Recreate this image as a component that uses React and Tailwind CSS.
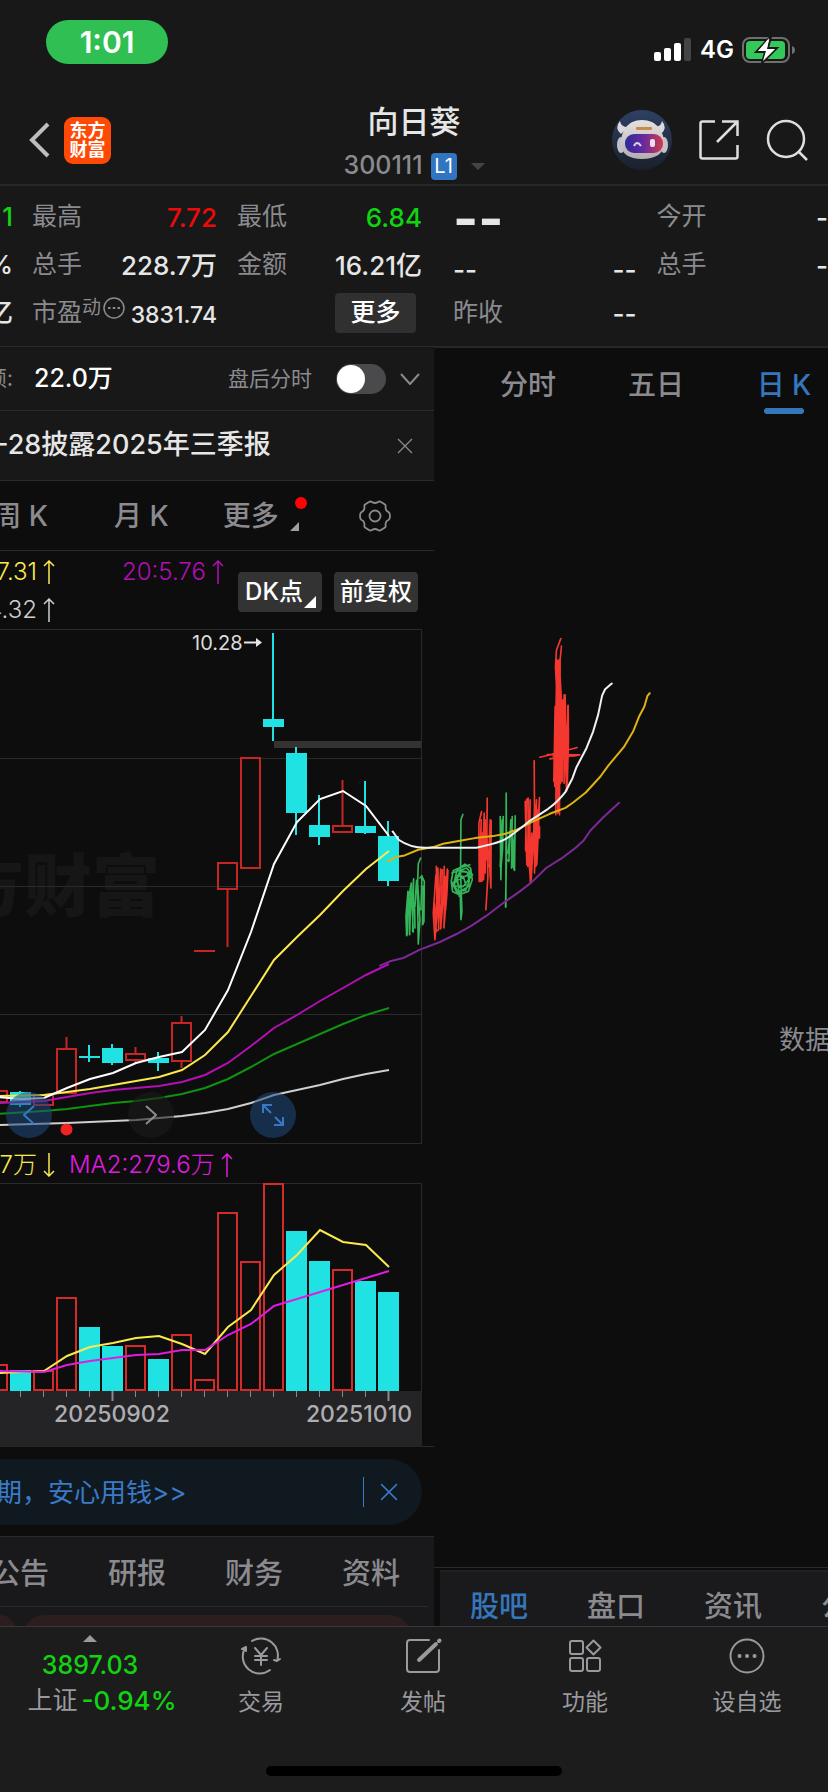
import clsx from 'clsx'

const FONT = "font-[Inter,'Noto_Sans_CJK_SC',sans-serif]"

const CANDLES = [
  { x: -2, up: true, open: 1091, close: 1102 },
  { x: 21, open: 1092, close: 1105, high: 1091, low: 1107 },
  { x: 44, up: true, open: 1095, close: 1105 },
  { x: 67, up: true, open: 1049, close: 1093, high: 1037 },
  { x: 90, open: 1056, close: 1058, high: 1045, low: 1062 },
  { x: 113, open: 1048, close: 1063, high: 1044, low: 1065 },
  { x: 136, up: true, open: 1054, close: 1060, high: 1047, low: 1063 },
  { x: 159, open: 1058, close: 1063, high: 1052, low: 1071 },
  { x: 182, up: true, open: 1023, close: 1061, high: 1016, low: 1068 },
  { x: 205, up: true, open: 951, close: 951 },
  { x: 228, up: true, open: 863, close: 889, low: 947 },
  { x: 251, up: true, open: 758, close: 868 },
  { x: 274, open: 719, close: 727, high: 633, low: 741 },
  { x: 297, open: 753, close: 813, high: 747, low: 835 },
  { x: 320, open: 825, close: 837, high: 795, low: 845 },
  { x: 343, up: true, open: 826, close: 832, high: 780 },
  { x: 366, open: 826, close: 833, high: 781, low: 834 },
  { x: 389, open: 836, close: 881, high: 821, low: 886 },
]

const VOLUMES = [
  { x: -2, up: true, top: 1365 },
  { x: 21, top: 1370 },
  { x: 44, up: true, top: 1371 },
  { x: 67, up: true, top: 1298 },
  { x: 90, top: 1327 },
  { x: 113, top: 1346 },
  { x: 136, up: true, top: 1346 },
  { x: 159, top: 1359 },
  { x: 182, up: true, top: 1335 },
  { x: 205, up: true, top: 1380 },
  { x: 228, up: true, top: 1213 },
  { x: 251, up: true, top: 1262 },
  { x: 274, up: true, top: 1184 },
  { x: 297, top: 1231 },
  { x: 320, top: 1261 },
  { x: 343, up: true, top: 1270 },
  { x: 366, top: 1281 },
  { x: 389, top: 1292 },
]

const MA_LINES = [
  {
    color: '#cfcfcf',
    points:
      '-2,1125 67,1123 136,1120 159,1118 182,1116 205,1113 228,1109 251,1103 274,1095 297,1090 320,1085 343,1079 366,1074 389,1070',
  },
  {
    color: '#0f930f',
    points:
      '-2,1114 44,1111 67,1109 90,1106 113,1103 136,1101 159,1098 182,1094 205,1088 228,1079 251,1067 274,1054 297,1044 320,1034 343,1024 366,1015 389,1008',
  },
  {
    color: '#b40fb4',
    points:
      '-2,1103 44,1101 67,1097 90,1093 113,1090 136,1088 159,1086 182,1082 205,1075 228,1063 251,1046 274,1028 297,1015 320,1001 343,988 366,975 389,964',
  },
  {
    color: '#fbe94e',
    points:
      '-2,1096 44,1095 67,1092 90,1089 113,1085 136,1081 159,1077 182,1070 205,1055 228,1032 251,996 274,960 297,937 320,915 343,891 366,869 389,851',
  },
  {
    color: '#ffffff',
    points:
      '-2,1097 21,1099 44,1098 67,1088 90,1079 113,1073 136,1063 159,1057 182,1052 205,1030 228,990 251,932 274,864 297,822 320,799 343,791 366,806 389,836',
  },
]

const VOLUME_LINES = [
  {
    color: '#fbe94e',
    points:
      '-2,1373 44,1371 67,1356 90,1347 113,1343 136,1338 159,1336 182,1344 205,1354 228,1327 251,1310 274,1275 297,1255 320,1230 343,1242 366,1245 389,1267',
  },
  {
    color: '#e01be0',
    points:
      '-2,1371 44,1372 67,1365 90,1361 113,1358 136,1355 159,1354 182,1350 205,1350 228,1335 251,1324 274,1306 297,1299 320,1292 343,1285 366,1278 389,1271',
  },
]

// freehand strokes, drawn on a 900 x 1080 board
const STROKES = [
  {
    color: '#34b559',
    d: 'M152 715L145 732L143 790L150 900L145 973M145 973L142 780M110 948L108 890L114 815L112 945M119 945L117 830L124 790L121 880L119 945M130 937L126 850L131 777L128 935M135 925L134 860L140 782L135 860M150 775L156 768L153 870M156 770L163 785L162 905L158 915L160 800M117 820L119 905',
  },
  {
    color: '#f5382f',
    d: 'M199 740L202 870L195 960L190 880L198 765M204 745L206 930L199 935L193 850M212 748L208 850L213 925L217 750M223 740L220 840L212 928L215 800M232 748L228 850L222 925L226 770M199 880L201 800M234 752L231 820L227 870',
  },
  {
    color: '#34b559',
    d: 'M279 584L273 600L272 760L276 875L273 900L271 820M300 735L275 742L250 752L244 785L248 815L268 825L295 815L307 780L302 745L285 733L262 750L252 790L262 815L287 812L298 785L292 757L270 755L258 780L270 803L288 795L280 770L262 768L268 830M246 760L290 745L308 765L280 800L250 798L276 752L300 760L296 800L262 820L247 790L305 760',
  },
  {
    color: '#f5382f',
    d: 'M352 535L351 640L354 770L348 870M335 575L327 610L328 785L334 600L331 785L338 640L336 785L343 580L341 780L346 600L346 760M361 600L357 700L363 805L364 602L358 740M352 560L350 720',
  },
  {
    color: '#34b559',
    d: 'M409 520L408 862M409 520L410 700L407 862M391 590L393 780L397 600L391 740M400 590L398 690L393 750M427 590L425 745L431 680L423 600L417 725L412 720M436 588L434 752L430 740L436 630M420 640L415 700',
  },
  {
    color: '#f5382f',
    d: 'M493 423L494 560L490 690L482 790L478 720L467 690L470 540L475 535L474 740L481 540L479 750L486 640L484 780L496 555L494 760L500 540L498 740L509 533L506 620L501 735M466 545L471 735M509 620L509 655M502 570L498 700',
  },
  {
    color: '#f5382f',
    d: 'M573 56L560 90L557 140L562 240L552 485L556 260L555 500L561 120L558 585L566 120L564 580L571 115L569 585M575 78L569 140L574 225L572 490L579 240L577 485L583 225L588 320L583 490L586 225L590 515L594 258L590 490M595 256L596 360L592 510M573 225L566 400',
  },
  {
    color: '#f5382f',
    d: 'M510 412L545 404L622 383M532 404L630 405L540 417M550 410L620 408',
  },
]

const SKETCH_LINES = [
  {
    color: '#7c2896',
    d: 'M30 1038L60 1025L100 1015L150 990L210 967L260 943L305 918L350 888L400 850L450 815L485 788L530 744L575 716L620 682L640 664L662 632L700 593L748 549',
  },
  {
    color: '#dcb312',
    d: 'M54 725L78 712L104 707L145 690L190 682L220 672L270 663L315 655L370 649L410 641L440 630L490 605L540 582L587 564L610 548L648 518L692 470L715 438L762 382L790 335L808 290L824 260L833 228L840 220',
  },
  {
    color: '#f2f2f2',
    d: 'M68 635L86 660Q120 684 165 684L320 684L365 673Q405 664 430 642Q460 620 480 603L535 567Q565 545 587 516L608 475L620 442L650 385L670 335L685 285L697 227L706 208L726 191',
  },
]

function ArrowUp({ className }) {
  return (
    <svg className={clsx('h-6 w-3 shrink-0', className)} viewBox="0 0 12 24" fill="none" stroke="currentColor" strokeWidth="1.5">
      <path d="M6 24V1M1 6l5-5 5 5" />
    </svg>
  )
}

function Cross({ className }) {
  return (
    <svg className={className} viewBox="0 0 16 16" fill="none" stroke="currentColor" strokeWidth="1.300" aria-hidden="true">
      <path d="M1 1l14 14M15 1L1 15" />
    </svg>
  )
}

function StatusBar() {
  return (
    <div className="flex h-[88px] items-start justify-between pt-5 pr-8 pl-[46px] text-white">
      <div className="flex h-11 w-[122px] items-center justify-center rounded-full bg-[#30bf52] text-3xl font-semibold">1:01</div>
      <div className="flex h-[60px] items-center">
        <svg className="h-6 w-[38px]" viewBox="0 0 38 24" fill="#fff" aria-hidden="true">
          <rect x="0" y="14" width="7" height="9" rx="2" />
          <rect x="10" y="10" width="7" height="13" rx="2" />
          <rect x="20" y="5" width="7" height="18" rx="2" />
          <rect x="30" y="0" width="7" height="23" rx="2" fill="#444" />
        </svg>
        <span className="ml-2 text-2xl font-semibold">4G</span>
        <svg className="ml-2 h-[26px] w-[54px]" viewBox="0 0 54 26" aria-hidden="true">
          <rect x="1" y="1" width="46" height="24" rx="7" fill="none" stroke="#6f6f6f" strokeWidth="2" />
          <rect x="4" y="4" width="39" height="18" rx="4" fill="#34c759" />
          <path d="M50 9q3 1 3 4t-3 4z" fill="#6f6f6f" />
          <path d="M28 0L14 15h9l-3 11L35 11h-9l3-11z" fill="#fff" stroke="#181818" strokeWidth="2" />
          <path d="M27 1L16 14h8l-3 10L33 12h-8z" fill="#fff" />
        </svg>
      </div>
    </div>
  )
}

function Robot() {
  return (
    <svg className="size-[60px]" viewBox="0 0 60 60" aria-hidden="true">
      <defs>
        <linearGradient id="sky" x1="0" y1="0" x2="0" y2="1">
          <stop offset="0" stopColor="#2e4163" />
          <stop offset="1" stopColor="#1a202c" />
        </linearGradient>
        <linearGradient id="visor">
          <stop offset="0" stopColor="#2a2b9c" />
          <stop offset="0.5" stopColor="#6a2a9c" />
          <stop offset="1" stopColor="#d23a4c" />
        </linearGradient>
        <linearGradient id="shell" x1="0" y1="0" x2="0" y2="1">
          <stop offset="0" stopColor="#e6e2e1" />
          <stop offset="1" stopColor="#b3adb2" />
        </linearGradient>
      </defs>
      <circle cx="30" cy="30" r="30" fill="url(#sky)" />
      <path d="M8 11q-6 7 1 13l7-7q-7 0-8-6zM50 11q6 7-1 13l-7-7q7 0 8-6z" fill="#dcd9dd" />
      <ellipse cx="9" cy="35" rx="4" ry="8" fill="#c4bfc8" />
      <ellipse cx="52" cy="35" rx="4" ry="8" fill="#c4bfc8" />
      <path d="M30 10C15 10 9 22 9 33c0 11 8 16 21 16s22-5 22-16C52 22 45 10 30 10z" fill="url(#shell)" />
      <rect x="24" y="17" width="16" height="3" rx="1" fill="#c98a4b" />
      <rect x="13" y="24" width="38" height="19" rx="9" fill="url(#visor)" />
      <path d="M22 36q3-6 7 0" fill="none" stroke="#d9d4f5" strokeWidth="2" />
      <rect x="38" y="29" width="5" height="8" rx="2" fill="#eadff0" />
    </svg>
  )
}

function Header() {
  return (
    <header className="border-b-2 border-[#272727] bg-[#181818]">
      <StatusBar />
      <div className="flex h-24 items-center justify-between px-5">
        <div className="flex flex-1 items-center gap-3.5 pt-2">
          <button type="button" aria-label="返回" className="ml-2">
            <svg className="h-9 w-[22px]" viewBox="0 0 22 36" fill="none" stroke="#bdbdbd" strokeWidth="4">
              <path d="M20 2L4 18l16 16" />
            </svg>
          </button>
          <a
            href="#home"
            className="flex size-[47px] flex-col items-center justify-center rounded-[9px] bg-[#ff4a05] text-lg leading-[19px] font-bold text-white"
          >
            <span>东方</span>
            <span>财富</span>
          </a>
        </div>
        <div className="flex flex-col items-center pt-3">
          <h1 className="text-[31px] leading-[44px] font-medium text-[#e6e6e6]">向日葵</h1>
          <div className="mt-1 flex h-9 items-center text-[25px] font-medium text-[#8a8a8f]">
            <span>300111</span>
            <span className="ml-2 flex h-[27px] w-[26px] items-center justify-center rounded bg-[#3074c2] text-xl font-normal text-white">
              L1
            </span>
            <svg className="ml-3.5 h-[7px] w-3.5" viewBox="0 0 14 7" fill="#444" aria-hidden="true">
              <path d="M0 0h14L7 7z" />
            </svg>
          </div>
        </div>
        <div className="flex flex-1 items-center justify-end gap-[27px] pt-2">
          <button type="button" aria-label="助手">
            <Robot />
          </button>
          <button type="button" aria-label="分享">
            <svg className="size-10" viewBox="0 0 40 40" fill="none" stroke="#dedede" strokeWidth="2.5">
              <path d="M16 1.500H3.500Q1.500 1.500 1.500 3.500V36.500Q1.500 38.500 3.500 38.500H36.500Q38.500 38.500 38.500 36.500V25M23 1.500H38.500V16M38 2L18 22" />
            </svg>
          </button>
          <button type="button" aria-label="搜索">
            <svg className="size-[42px]" viewBox="0 0 42 42" fill="none" stroke="#dedede" strokeWidth="2.5">
              <circle cx="20" cy="20" r="18" />
              <path d="M32 32l9 9" />
            </svg>
          </button>
        </div>
      </div>
    </header>
  )
}

function Quote({ label, value, tone = 'text-[#e6e6e6]' }) {
  return (
    <div className="flex h-12 items-center justify-between">
      <dt className="text-[25px] text-[#8a8a8f]">{label}</dt>
      <dd className={clsx('text-[26px] font-medium', tone)}>{value}</dd>
    </div>
  )
}

function Quotes() {
  return (
    <section className="grid grid-cols-[434fr_394fr] bg-[#181818] pt-[7px] pb-[9px] whitespace-nowrap">
      <div className="flex gap-[19px] overflow-hidden pr-3">
        <div className="flex w-[13px] shrink-0 flex-col items-end text-[26px] leading-[48px] font-medium text-[#e6e6e6]">
          <span className="text-[#12d312]">1</span>
          <span>%</span>
          <span>亿</span>
        </div>
        <dl className="grid flex-1 grid-cols-2 gap-x-5">
          <Quote label="最高" value="7.72" tone="text-[#ea0b0b]" />
          <Quote label="最低" value="6.84" tone="text-[#12d312]" />
          <Quote label="总手" value="228.7万" />
          <Quote label="金额" value="16.21亿" />
          <div className="flex h-12 items-center justify-between text-[#8a8a8f]">
            <dt className="flex items-center text-[25px]">
              市盈<sup className="top-0 self-start text-[19px] leading-7">动</sup>
              <svg className="mb-2.5 ml-0.5 size-[22px]" viewBox="0 0 22 22" fill="none" stroke="currentColor" strokeWidth="1.5" aria-hidden="true">
                <circle cx="11" cy="11" r="10" />
                <path d="M5 11h2.500M9.750 11h2.500M14.500 11h2.500" strokeWidth="2" />
              </svg>
            </dt>
            <dd className="pt-1 text-[23px] font-medium text-[#e6e6e6]">3831.74</dd>
          </div>
          <div className="flex h-12 items-center justify-end pr-1.5">
            <button type="button" className="h-10 w-[81px] rounded bg-[#303030] pb-0.5 text-[25px] leading-9 font-medium text-white">
              更多
            </button>
          </div>
        </dl>
      </div>
      <div className="overflow-hidden pl-[19px]">
        <dl className="grid w-[387px] grid-cols-2 gap-x-5">
          <div className="flex h-12 items-center pt-1 text-[54px] leading-[44px] font-bold text-[#e6e6e6]">
            <dd>--</dd>
          </div>
          <Quote label="今开" value="--" />
          <div className="flex h-12 items-end justify-between text-[26px] font-medium text-[#e6e6e6]">
            <dd>--</dd>
            <dd>--</dd>
          </div>
          <Quote label="总手" value="--" />
          <Quote label="昨收" value="--" />
        </dl>
      </div>
    </section>
  )
}

function AfterHours() {
  return (
    <div className="flex h-16 items-center border-b border-[#2a2a2a] bg-[#181818] pr-3.5">
      <span className="flex w-[13px] shrink-0 justify-end text-[22px] text-[#8a8a8f]">额:</span>
      <span className="ml-[21px] text-[25px] font-medium text-white">22.0万</span>
      <label htmlFor="after-hours" className="ml-auto text-[21px] text-[#8a8a8f]">
        盘后分时
      </label>
      <span className="relative ml-6 flex h-[30px] w-[50px] rounded-full bg-[#4a4a4d]">
        <input id="after-hours" type="checkbox" role="switch" className="size-full appearance-none rounded-full" />
        <span className="pointer-events-none absolute top-px left-px size-7 rounded-full bg-white" />
      </span>
      <button type="button" aria-label="展开" className="ml-3.5">
        <svg className="h-3 w-5" viewBox="0 0 20 12" fill="none" stroke="#8a8a8f" strokeWidth="2">
          <path d="M1 1l9 10 9-10" />
        </svg>
      </button>
    </div>
  )
}

function Notice() {
  return (
    <div className="flex h-[70px] items-center justify-between border-b border-[#2a2a2a] bg-[#181818] pr-[21px]">
      <p className="-ml-1 text-[27px] font-medium whitespace-nowrap text-[#e6e6e6]">-28披露2025年三季报</p>
      <button type="button" aria-label="关闭" className="text-[#8a8a8f]">
        <Cross className="size-4" />
      </button>
    </div>
  )
}

function PeriodTabs() {
  return (
    <div className="flex h-[70px] items-center border-b border-[#2a2a2a] text-[28px] font-medium whitespace-nowrap text-[#8a8a8f]">
      <button type="button" className="flex w-12 shrink-0 justify-end">
        周 K
      </button>
      <button type="button" className="ml-[66px]">
        月 K
      </button>
      <button type="button" className="relative ml-[54px]">
        更多
        <span className="absolute top-0.5 -right-7 size-3 rounded-full bg-[#ff0303]" />
        <svg className="absolute -right-5 bottom-1.5 size-[9px]" viewBox="0 0 9 9" fill="#a0a0a0" aria-hidden="true">
          <path d="M9 0v9H0z" />
        </svg>
      </button>
      <button type="button" aria-label="设置" className="mr-[43px] ml-auto">
        <svg className="size-8" viewBox="0 0 32 32" fill="none" stroke="currentColor" strokeWidth="1.800" strokeLinejoin="round">
          <path d="M10 2q1.500-1 3 0q3 2 6 0q1.500-1 3 0l4 2.500q1 1 .5 2.500q0 4 3 5q1.500 1 1.500 4t-1.500 4q-3 1-3 5q.5 1.500-.5 2.500l-4 2.500q-1.500 1-3 0q-3-2-6 0q-1.500 1-3 0l-4-2.500q-1-1-.5-2.500q0-4-3-5Q1 19 1 16t1.500-4q3-1 3-5q-.5-1.500.5-2.500z" />
          <circle cx="16" cy="16" r="5.500" />
        </svg>
      </button>
    </div>
  )
}

function MaLegend() {
  return (
    <div className="flex h-[78px] justify-between pr-4 text-2xl font-light whitespace-nowrap">
      <div className="grid grid-cols-[55px_auto] content-start gap-x-[67px] pt-0.5">
        <span className="flex h-[38px] items-center justify-end gap-1.5 text-[#fbe94e]">
          7.31
          <ArrowUp />
        </span>
        <span className="flex h-[38px] items-center gap-1.5 text-[#b40fb4]">
          20:5.76
          <ArrowUp />
        </span>
        <span className="flex h-[38px] items-center justify-end gap-1.5 text-[#cfcfcf]">
          4.32
          <ArrowUp />
        </span>
      </div>
      <div className="flex items-center gap-3 pt-1 text-2xl font-medium text-white">
        <button type="button" className="relative h-10 w-[84px] rounded bg-[#333] pr-3">
          DK点
          <svg className="absolute right-1.5 bottom-1 size-3" viewBox="0 0 12 12" fill="#fff" aria-hidden="true">
            <path d="M12 0v12H0z" />
          </svg>
        </button>
        <button type="button" className="h-10 w-[84px] rounded bg-[#333]">
          前复权
        </button>
      </div>
    </div>
  )
}

function Candle({ x, up, open, close, high = open, low = close }) {
  const color = up ? '#c42525' : '#20e2e2'
  if (open === close) {
    return <rect x={x - 11} y={open - 1} width="21" height="2" fill={color} />
  }
  if (up) {
    return (
      <g stroke={color} strokeWidth="2" fill="none">
        <path d={`M${x - 0.5} ${high}V${open}M${x - 0.5} ${close}V${low}`} />
        <rect x={x - 10} y={open} width="19" height={close - open} />
      </g>
    )
  }
  return (
    <g fill={color}>
      <rect x={x - 2} y={high} width="2" height={low - high} />
      <rect x={x - 11} y={open} width="21" height={close - open} />
    </g>
  )
}

function PriceChart() {
  return (
    <div className="relative">
      <svg className="block h-auto w-full" viewBox="0 629 434 515" role="img" aria-label="日K线">
        <text
          x="160"
          y="911"
          textAnchor="end"
          fill="#161616"
          className="font-['Noto_Sans_CJK_SC',sans-serif] text-[68px] font-black"
        >
          方财富
        </text>
        <path d="M0 629.500H421.500V1143.500H0M0 758.500H421M0 886.500H421M0 1014.500H421" fill="none" stroke="#2a2a2a" />
        <rect x="274" y="741" width="147" height="7" fill="#333" />
        {CANDLES.map((c) => (
          <Candle key={c.x} {...c} />
        ))}
        {MA_LINES.map((l) => (
          <polyline key={l.color} points={l.points} fill="none" stroke={l.color} strokeWidth="2" />
        ))}
        <circle cx="66.500" cy="1129.500" r="6" fill="#f02222" />
        <text x="192" y="650" fill="#dcdcdc" className="text-xl">
          10.28
        </text>
        <path d="M244 642.500h14" stroke="#e6e6e6" strokeWidth="2" />
        <path d="M256 638l6 4.500-6 4.500z" fill="#e6e6e6" />
      </svg>
      <div className="absolute bottom-1.5 left-1.5 flex gap-[76px]">
        <button type="button" aria-label="左移" className="flex size-[46px] items-center justify-center rounded-full bg-[#1f4a7c]/55">
          <svg className="h-5 w-3" viewBox="0 0 12 20" fill="none" stroke="#3478c6" strokeWidth="2">
            <path d="M11 1L1 10l10 9" />
          </svg>
        </button>
        <button type="button" aria-label="右移" className="flex size-[46px] items-center justify-center rounded-full bg-[#1a1a1a]/60">
          <svg className="h-5 w-3" viewBox="0 0 12 20" fill="none" stroke="#8c8c8c" strokeWidth="2">
            <path d="M1 1l10 9-10 9" />
          </svg>
        </button>
        <button type="button" aria-label="全屏" className="flex size-[46px] items-center justify-center rounded-full bg-[#1f4a7c]/55">
          <svg className="size-[22px]" viewBox="0 0 22 22" fill="none" stroke="#3478c6" strokeWidth="2">
            <path d="M1 9V1h9M1 1l8 8M21 13v8h-9M21 21l-8-8" />
          </svg>
        </button>
      </div>
    </div>
  )
}

function VolumeChart() {
  return (
    <div>
      <div className="flex h-[39px] items-center pt-0.5 text-2xl font-light whitespace-nowrap">
        <span className="flex w-[55px] shrink-0 items-center justify-end gap-1.5 text-[#fbe94e]">
          7万
          <ArrowUp className="rotate-180" />
        </span>
        <span className="ml-3.5 flex items-center gap-1.5 text-[#e01be0]">
          MA2:279.6万
          <ArrowUp />
        </span>
      </div>
      <svg className="block h-auto w-full" viewBox="0 1183 434 264" role="img" aria-label="成交量">
        <path d="M0 1183.500H421.500V1391" fill="none" stroke="#2a2a2a" />
        {VOLUMES.map((v) =>
          v.up ? (
            <rect key={v.x} x={v.x - 10} y={v.top} width="19" height={1390 - v.top} fill="none" stroke="#d42a2a" strokeWidth="2" />
          ) : (
            <rect key={v.x} x={v.x - 11} y={v.top} width="21" height={1391 - v.top} fill="#20e2e2" />
          ),
        )}
        {VOLUME_LINES.map((l) => (
          <polyline key={l.color} points={l.points} fill="none" stroke={l.color} strokeWidth="2" />
        ))}
        <rect x="0" y="1391" width="422" height="56" fill="#242426" />
        <path d="M422 1446.500h12" stroke="#2a2a2a" />
        {VOLUMES.map((v) => (
          <path key={v.x} d={`M${v.x - 0.5} 1391v6`} stroke="#8a8a8f" />
        ))}
        <path d="M112.500 1391v10M388.500 1391v10" stroke="#8a8a8f" strokeWidth="2" />
        <text x="112" y="1422" textAnchor="middle" fill="#aeaeb2" className="text-[23px] font-medium">
          20250902
        </text>
        <text x="359" y="1422" textAnchor="middle" fill="#aeaeb2" className="text-[23px] font-medium">
          20251010
        </text>
      </svg>
    </div>
  )
}

function Banner() {
  return (
    <div className="mt-3 mr-3 mb-[11px] flex h-[66px] items-center rounded-r-full bg-[#101820] pr-6 text-[#3a7bc8]">
      <a href="#loan" className="-ml-1 text-[26px] whitespace-nowrap">
        期，安心用钱&gt;&gt;
      </a>
      <span className="ml-auto h-[30px] w-px bg-[#3a7bc8]" />
      <button type="button" aria-label="关闭" className="ml-4">
        <Cross className="size-[18px]" />
      </button>
    </div>
  )
}

function StockPanel() {
  return (
    <section className="overflow-hidden border-t border-[#2a2a2a] bg-[#0d0d0d]">
      <AfterHours />
      <Notice />
      <PeriodTabs />
      <MaLegend />
      <PriceChart />
      <VolumeChart />
      <Banner />
      <div className="border-t border-[#2a2a2a] bg-[#19191b]">
        <nav className="mr-1.5 flex h-[70px] items-center gap-[59px] border-b border-[#2a2a2a] pt-1 text-[29px] font-medium whitespace-nowrap text-[#8a8a8f]">
          <a href="#notices" className="-ml-[9px]">公告</a>
          <a href="#research">研报</a>
          <a href="#finance">财务</a>
          <a href="#profile">资料</a>
        </nav>
        <div className="flex h-[19px] gap-2 overflow-hidden pt-2 pr-6">
          <div className="h-10 w-4 rounded-tr-[20px] bg-[#2c1e1e]" />
          <div className="h-10 flex-1 rounded-t-[20px] bg-[#2c1e1e]" />
        </div>
      </div>
    </section>
  )
}

function NextPanel() {
  return (
    <section className="flex flex-col overflow-hidden border-t-2 border-[#272727] bg-[#0d0d0d] whitespace-nowrap">
      <nav className="flex pl-[30px] text-[28px] font-medium text-[#8a8a8f]">
        <a href="#minute" className="flex h-[74px] w-32 shrink-0 items-center justify-center">分时</a>
        <a href="#five-day" className="flex h-[74px] w-32 shrink-0 items-center justify-center">五日</a>
        <a href="#day" className="relative flex h-[74px] w-32 shrink-0 items-center justify-center text-[#3577bd]">
          日 K
          <span className="absolute bottom-2 h-1.5 w-10 rounded-full bg-[#3577bd]" />
        </a>
      </nav>
      <div className="flex flex-1 items-center justify-end pt-[90px] text-[26px] text-[#8a8a8f]">
        <span className="w-[49px] overflow-hidden">数据</span>
      </div>
      <div className="border-t border-[#2a2a2a] pt-0.5">
        <nav className="ml-1.5 flex h-[56px] items-center gap-[59px] overflow-hidden border-t-2 border-[#202020] bg-[#1a1a1c] pt-4 pl-[30px] text-[29px] font-medium text-[#8a8a8f]">
          <a href="#forum" className="text-[#3577bd]">股吧</a>
          <a href="#depth">盘口</a>
          <a href="#news">资讯</a>
          <a href="#notices">公告</a>
        </nav>
      </div>
    </section>
  )
}

function Sketch() {
  return (
    <svg className="pointer-events-none absolute top-0 left-0 h-auto w-full" viewBox="0 346 828 1280" aria-hidden="true">
      <g transform="translate(370 620) scale(0.333)" fill="none" strokeLinejoin="round" strokeLinecap="round">
        {STROKES.map((s) => (
          <path key={s.d} d={s.d} stroke={s.color} strokeWidth="5" />
        ))}
        {SKETCH_LINES.map((s) => (
          <path key={s.d} d={s.d} stroke={s.color} strokeWidth="6" />
        ))}
      </g>
    </svg>
  )
}

function NavItem({ label, children }) {
  return (
    <button type="button" className="flex flex-1 flex-col items-center pt-[9px] text-[23px] text-[#9a9a9e]">
      <svg className="size-10" viewBox="0 0 40 40" fill="none" stroke="currentColor" strokeWidth="2" strokeLinecap="round" strokeLinejoin="round" aria-hidden="true">
        {children}
      </svg>
      <span className="mt-2 leading-9">{label}</span>
    </button>
  )
}

function BottomBar() {
  return (
    <footer className="border-t border-[#383838] bg-[#1c1c1c]">
      <div className="flex h-[139px] items-start">
        <button type="button" className="flex w-[180px] shrink-0 flex-col items-center pt-2 text-[25px] leading-[35px] font-medium whitespace-nowrap text-[#12d312]">
          <svg className="h-[7px] w-3.5" viewBox="0 0 14 7" fill="#9a9a9e" aria-hidden="true">
            <path d="M0 7L7 0l7 7z" />
          </svg>
          <span className="mt-1.5">3897.03</span>
          <span className="flex gap-1 pl-6 text-[26px]">
            <span className="text-[25px] font-normal text-[#9a9a9e]">上证</span>
            <span>-0.94%</span>
          </span>
        </button>
        <NavItem label="交易">
          <path d="M11 5A17 17 0 0 1 36 25M36 25l-3-1M36 25l3-2M29 34A17 17 0 0 1 4 12M1 13l4-2 0 4" />
          <path d="M14 12l6 7 6-7M20 19v10M14 20h12M14 24h12" />
        </NavItem>
        <NavItem label="发帖">
          <path d="M26 4H7Q4 4 4 7V33Q4 36 7 36H33Q36 36 36 33V14" />
          <path d="M16 24L33 8M36 5l.5-.5" strokeWidth="4" />
        </NavItem>
        <NavItem label="功能">
          <rect x="5" y="5" width="13" height="13" rx="2" />
          <rect x="5" y="22" width="13" height="13" rx="2" />
          <rect x="22" y="22" width="13" height="13" rx="2" />
          <path d="M28.500 4.500l7 7-7 7-7-7z" />
        </NavItem>
        <NavItem label="设自选">
          <circle cx="20" cy="20" r="16.500" />
          <path d="M12.500 20h.1M20 20h.1M27.500 20h.1" strokeWidth="4" />
        </NavItem>
      </div>
      <div className="mx-auto mb-4 h-2.5 w-[296px] rounded-full bg-black" />
    </footer>
  )
}

export default function App() {
  return (
    <div className={clsx('min-h-screen overflow-hidden bg-[#1c1c1c]', FONT)}>
      <Header />
      <Quotes />
      <main className="relative grid grid-cols-[434fr_394fr]">
        <StockPanel />
        <NextPanel />
        <Sketch />
      </main>
      <BottomBar />
    </div>
  )
}
